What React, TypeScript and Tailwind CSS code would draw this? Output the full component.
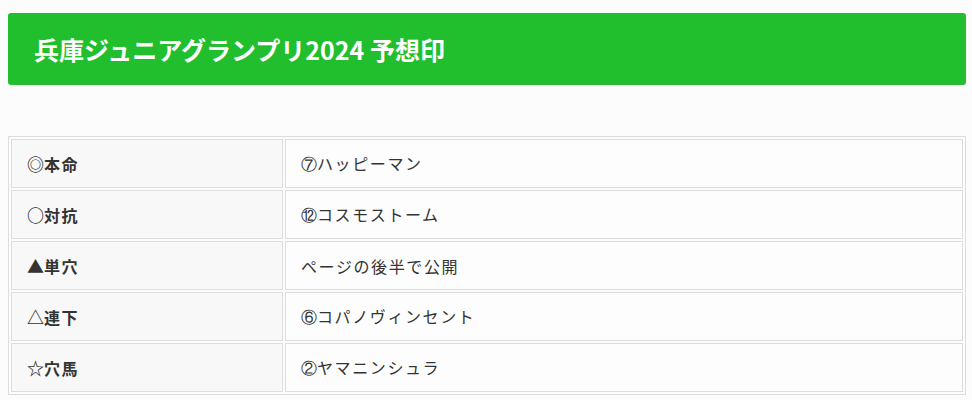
const rows = [
  { mark: '◎', label: '本命', num: '⑦', horse: 'ハッピーマン' },
  { mark: '○', label: '対抗', num: '⑫', horse: 'コスモストーム' },
  { mark: '▲', label: '単穴', num: '', horse: 'ページの後半で公開' },
  { mark: '△', label: '連下', num: '⑥', horse: 'コパノヴィンセント' },
  { mark: '☆', label: '穴馬', num: '②', horse: 'ヤマニンシュラ' },
];

export default function App() {
  return (
    <main
      lang="ja"
      className="min-h-[400px] bg-[#fcfcfc] px-2 pt-[13px] text-[#333]"
      style={{ fontFamily: '"Noto Sans CJK JP", "Noto Sans", sans-serif' }}
    >
      <div className="flex h-[72px] w-[958px] items-center rounded-[3px] bg-[#21bf2d] px-[26px]">
        <h2 className="text-[25px] font-bold leading-none text-white">兵庫ジュニアグランプリ2024 予想印</h2>
      </div>

      <table className="mt-[51px] w-[958px] border-separate border-spacing-[2px] border border-[#ddd]">
        <tbody>
          {rows.map((row) => (
            <tr key={row.label}>
              <td className="h-[49px] w-[272px] border border-[#ddd] bg-[#f8f8f8] px-[15px] text-[16px] font-bold tracking-[0.1em]">
                <span className="text-[17px] leading-none tracking-normal">{row.mark}</span>
                {row.label}
              </td>
              <td className="h-[49px] border border-[#ddd] bg-[#fdfdfd] px-[15px] text-[16px] tracking-[0.1em]">
                {row.num && (
                  <span className="tracking-normal" style={{ fontFamily: 'serif' }}>
                    {row.num}
                  </span>
                )}
                {row.horse}
              </td>
            </tr>
          ))}
        </tbody>
      </table>
    </main>
  );
}
